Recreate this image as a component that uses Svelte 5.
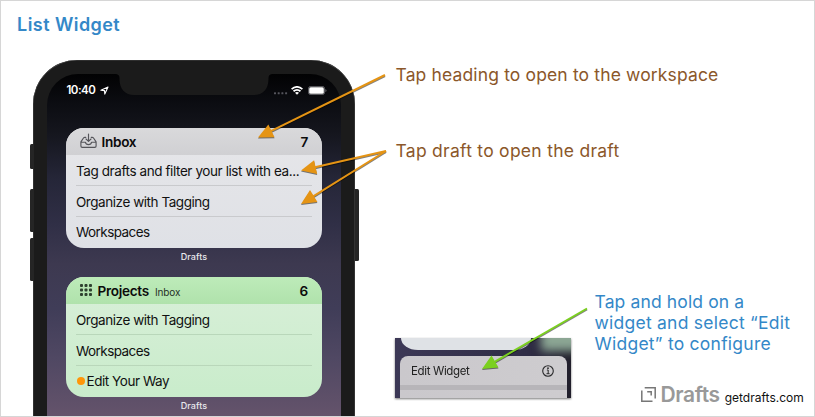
<script>
  const widgets = [
    {
      title: 'Inbox', sub: '', count: 7, icon: 'tray', tone: 'light',
      rows: [
        { text: 'Tag drafts and filter your list with ea...', cls: 'long' },
        { text: 'Organize with Tagging', cls: 'mid' },
        { text: 'Workspaces', cls: 'short' }
      ]
    },
    {
      title: 'Projects', sub: 'Inbox', count: 6, icon: 'grid', tone: 'green',
      rows: [
        { text: 'Organize with Tagging', cls: 'mid' },
        { text: 'Workspaces', cls: 'short' },
        { text: 'Edit Your Way', cls: 'edit', dot: true }
      ]
    }
  ];
  const arrows = [
    { x1: 385, y1: 75, x2: 258, y2: 137.5, color: '#e59414' },
    { x1: 386, y1: 151, x2: 301, y2: 170.5, color: '#e59414' },
    { x1: 386, y1: 151, x2: 301, y2: 204, color: '#e59414' },
    { x1: 587, y1: 308.5, x2: 482, y2: 369, color: '#7bd01f' }
  ];
  const head = (a) => {
    const d = Math.hypot(a.x1 - a.x2, a.y1 - a.y2);
    const ux = (a.x1 - a.x2) / d, uy = (a.y1 - a.y2) / d;
    const bx = a.x2 + ux * 15, by = a.y2 + uy * 15;
    return `${a.x2},${a.y2} ${bx - uy * 7},${by + ux * 7} ${bx + uy * 7},${by - ux * 7}`;
  };
  const shaft = (a) => {
    const d = Math.hypot(a.x1 - a.x2, a.y1 - a.y2);
    return { x: a.x2 + ((a.x1 - a.x2) / d) * 12, y: a.y2 + ((a.y1 - a.y2) / d) * 12 };
  };
</script>

<div class="page">
  <h1><span>List Widget</span></h1>

  <div class="phone">
    <i class="key mute"></i><i class="key up"></i><i class="key down"></i><i class="key power"></i>
    <div class="screen">
      <svg class="notch" width="160" height="22" viewBox="0 0 160 22">
        <path d="M0 0H160C155 0 154.500 1.500 154.500 5C154.500 15 149 21 140 21H20C11 21 5.500 15 5.500 5C5.500 1.500 5 0 0 0Z" fill="#1b1b1b" />
      </svg>
      <div class="status">
        <span class="time">10:40</span>
        <svg class="loc" width="9" height="9" viewBox="0 0 9 9"><path d="M.9 4.300L8 1 4.800 8.100 4.500 4.600Z" fill="none" stroke="#fff" stroke-width="1.100" stroke-linejoin="round" /></svg>
        <span class="gap"></span>
        <svg width="14" height="10" viewBox="0 0 14 10" fill="#55555c"><rect x="0" y="7.300" width="2" height="2" rx=".5" /><rect x="3.700" y="7.300" width="2" height="2" rx=".5" /><rect x="7.400" y="7.300" width="2" height="2" rx=".5" /><rect x="11.100" y="7.300" width="2" height="2" rx=".5" /></svg>
        <svg class="wifi" width="12" height="9" viewBox="0 0 12 9" fill="none" stroke="#fff" stroke-width="1.800"><path d="M.6 3.100Q6-1.300 11.400 3.100M2.500 5.300Q6 2.400 9.500 5.300" /><path d="M4 6.800Q6 5.400 8 6.800L6 8.800Z" fill="#fff" stroke="none" /></svg>
        <svg class="battery" width="19" height="9" viewBox="0 0 19 9"><rect x=".4" y=".4" width="16.200" height="8.200" rx="2.400" fill="none" stroke="#77777c" stroke-width=".8" /><rect x="1.200" y="1.200" width="14.600" height="6.600" rx="1.500" fill="#fff" /><path d="M17.500 3v3q.9-.5.9-1.500t-.9-1.500" fill="#77777c" /></svg>
      </div>

      {#each widgets as w}
        <section class="widget {w.tone}">
          <header>
            {#if w.icon === 'tray'}
              <svg class="tray" width="17" height="16" viewBox="0 0 17 16" fill="none" stroke="#55555a" stroke-width="1.150" stroke-linecap="round" stroke-linejoin="round">
                <path d="M5.800 4.300H4.800Q4 4.300 3.500 5L.9 8.900V13Q.9 14.300 2.200 14.300H14.800Q16.100 14.300 16.100 13V8.900L13.500 5Q13 4.300 12.200 4.300H11.200M.9 9.200H5.400Q5.800 11.600 8.500 11.600T11.600 9.200H16.100M8.500 1V8.200M6 6L8.500 8.400 11 6" />
              </svg>
            {:else}
              <svg class="grid" width="12" height="12" viewBox="0 0 12 12" fill="#2f4230">
                {#each [0, 1, 2] as r}{#each [0, 1, 2] as c}<rect x={c * 4.500} y={r * 4.500} width="3" height="3" rx=".9" />{/each}{/each}
              </svg>
            {/if}
            <b>{w.title}</b>
            {#if w.sub}<small>{w.sub}</small>{/if}
            <b class="count">{w.count}</b>
          </header>
          {#each w.rows as row}
            <div class="row">{#if row.dot}<i class="dot"></i>{/if}<span class={row.cls}>{row.text}</span></div>
          {/each}
        </section>
        <p class="app">Drafts</p>
      {/each}
    </div>
  </div>

  <div class="note brown n1">Tap heading to open to the workspace</div>
  <div class="note brown n2">Tap draft to open the draft</div>
  <div class="note blue n3">
    <div class="l1">Tap and hold on a</div>
    <div class="l2">widget and select “Edit</div>
    <div class="l3">Widget” to configure</div>
  </div>

  <div class="snippet">
    <i class="glow"></i>
    <div class="tail"></div>
    <div class="menu">
      <div class="item">
        <span>Edit Widget</span>
        <svg width="12" height="12" viewBox="0 0 12 12" fill="none" stroke="#29292b"><circle cx="6" cy="6" r="5.300" stroke-width="1.100" /><path d="M4.900 5H6.200V8.600M4.500 8.700H7.600" stroke-width="1" /><circle cx="6" cy="3.200" r=".9" fill="#29292b" stroke="none" /></svg>
      </div>
      <div class="band"></div>
    </div>
  </div>

  <footer>
    <svg width="15" height="15" viewBox="0 0 15 15" fill="none" stroke="#777" stroke-width="1.500"><path d="M3.700.8H14.200V11.500M.8 3.500V14.200H11.500M6.200 4.700H10.200V8.500" /></svg>
    <strong>Drafts</strong>
    <span>getdrafts.com</span>
  </footer>

  <svg class="arrows" width="815" height="417" viewBox="0 0 815 417">
    {#each arrows as a}
      <g fill={a.color} stroke={a.color}>
        <line x1={a.x1} y1={a.y1} x2={shaft(a).x} y2={shaft(a).y} stroke-width="2" />
        <polygon points={head(a)} stroke="none" />
      </g>
    {/each}
  </svg>
</div>

<style>
  :global(body) { margin: 0; background: #fff; }
  .page {
    position: relative; box-sizing: border-box; width: 815px; height: 417px; overflow: hidden;
    border: 1px solid #d6d6d6; background: #fff;
    font-family: Inter, "Liberation Sans", sans-serif; color: #111;
  }
  h1 { margin: 0; padding: 12px 0 0 16px; font-size: 18px; line-height: 24px; font-weight: 600; color: #3488c8; letter-spacing: .45px; }
  .phone {
    position: absolute; left: 32px; top: 59px; box-sizing: border-box; width: 322px; height: 420px;
    padding: 14px 14px 0; border-radius: 44px 44px 0 0; background: #1b1b1b; box-shadow: inset 0 0 0 .6px #444;
  }
  .key { position: absolute; left: -3.500px; width: 4px; border-radius: 1.500px 0 0 1.500px; background: #252525; }
  .mute { top: 84px; height: 25px; }
  .up { top: 129px; height: 43px; }
  .down { top: 178px; height: 43px; }
  .power { left: auto; right: -3.500px; top: 129px; height: 72px; border-radius: 0 1.500px 1.500px 0; }
  .screen {
    position: relative; height: 400px; box-sizing: border-box; padding: 0 19px; border-radius: 31px 31px 0 0; overflow: hidden;
    background: linear-gradient(#020203 0, #0c0d12 30px, #15161e 60px, #252638 105px, #302f46 150px, #3d3950 190px, #403d58 235px, #504863 285px, #64536b 342px);
  }
  .notch { position: absolute; left: 67px; top: 0; }
  .status { display: flex; align-items: center; height: 32px; }
  .time { margin-left: .5px; font-size: 11.500px; font-weight: 600; color: #fff; letter-spacing: -.5px; width: 31px; white-space: nowrap; }
  .loc { margin-left: 2px; }
  .gap { flex: 1; }
  .wifi { margin-left: 3.500px; }
  .battery { margin: 0 -5px 0 5px; }
  .widget { height: 119.500px; border-radius: 18px; overflow: hidden; margin-top: 22px; }
  .light { background: linear-gradient(#e6e6e9, #dfe1e6); }
  .green { background: linear-gradient(#d9efd9, #c9eccb); }
  header { box-sizing: border-box; display: flex; align-items: center; height: 27.400px; padding: 0 14px; }
  .light header { background: linear-gradient(#d9d9db, #d0d0d3); }
  .green header { background: linear-gradient(#bdebb9, #b0e2ac); }
  header b { font-size: 13.600px; font-weight: 600; color: #0b0b0b; letter-spacing: -.3px; }
  .tray { margin: -1px 5px 0 -.5px; }
  .grid { margin: -1px 5.500px 0 0; }
  small { font-size: 10px; margin: 2px 0 0 6px; color: #273127; letter-spacing: -.1px; }
  header .count { margin-left: auto; }
  .row { display: flex; align-items: center; height: 29.800px; margin: 0 10px; border-bottom: 1px solid #c9cacd; font-size: 13.500px; white-space: nowrap; }
  .row { box-sizing: border-box; height: 30.800px; }
  .green .row { border-color: #b9d7ba; }
  .row:last-child { border: 0; }
  .row span { padding-top: 1.400px; }
  .row:last-child span { padding-top: 0; }
  .row .long { letter-spacing: -.41px; }
  .row .mid { letter-spacing: -.45px; }
  .row .short { letter-spacing: -.57px; }
  .row .edit { letter-spacing: -.45px; }
  .dot { width: 8px; height: 8px; border-radius: 50%; background: #ff9609; margin: 0 2px 0 .5px; }
  .app { margin: 3px 0 0; height: 12px; line-height: 12px; text-align: center; font-size: 9px; font-weight: 500; color: #e8e8ec; letter-spacing: .1px; }
  .app + .widget { margin-top: 14.500px; }
  .note { position: absolute; font-size: 17.500px; line-height: 21px; white-space: nowrap; }
  .brown { color: #8b572a; }
  .blue { color: #3488c8; }
  .n1 { left: 394.500px; top: 63px; letter-spacing: .14px; }
  .n2 { left: 394.500px; top: 139px; letter-spacing: .27px; }
  .n3 { left: 593.500px; top: 290px; }
  .l1 { letter-spacing: .13px; }
  .l2 { letter-spacing: .24px; }
  .l3 { letter-spacing: .24px; }
  .snippet {
    position: absolute; left: 394px; top: 337px; width: 176px; height: 60px; overflow: hidden;
    background: linear-gradient(90deg, #3c3856, #302d46 75%, #211f2b); filter: drop-shadow(0 1px 1px #777);
  }
  .glow { position: absolute; left: 146px; top: -18px; width: 44px; height: 31px; background: #8ca694; filter: blur(5px); }
  .tail { position: relative; width: 130px; height: 12px; margin-left: 6px; border-radius: 0 0 17px 17px / 0 0 12px 12px; background: #dfe2e6; }
  .menu { position: relative; height: 42px; margin: 6px 4px 0 5px; border-radius: 8px 8px 0 0; background: linear-gradient(90deg, #cac8cc, #cecccf); }
  .item { display: flex; align-items: center; justify-content: space-between; height: 29px; padding: 0 13px 0 11px; font-size: 11.500px; letter-spacing: -.36px; color: #222; }
  .band { height: 5px; background: #b7b5b9; }
  footer { position: absolute; left: 640px; top: 381px; height: 26px; display: flex; align-items: baseline; white-space: nowrap; }
  footer strong { margin-left: 4.500px; font-size: 21px; line-height: 26px; font-weight: 600; color: #999; letter-spacing: -.4px; }
  footer span { margin-left: 5px; font-size: 12px; color: #111; letter-spacing: .02px; }
  .arrows { position: absolute; left: -1px; top: -1px; filter: drop-shadow(0 1px .7px rgba(0,0,0,.5)); }
</style>
